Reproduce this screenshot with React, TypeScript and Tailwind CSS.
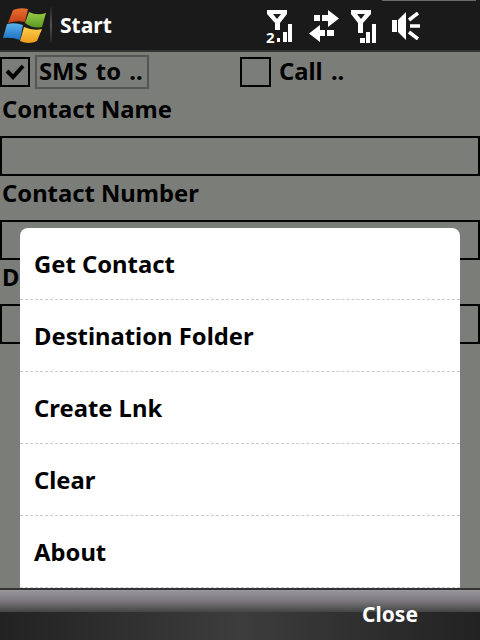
const font = { fontFamily: '"Noto Sans", "DejaVu Sans", sans-serif' };

function WinLogo() {
  return (
    <svg width="50" height="50" viewBox="0 0 50 50" className="block">
      <defs>
        <linearGradient id="red" x1="0" y1="0" x2="0" y2="1">
          <stop offset="0" stopColor="#e8702c" />
          <stop offset="1" stopColor="#c63f17" />
        </linearGradient>
        <linearGradient id="green" x1="0" y1="0" x2="0" y2="1">
          <stop offset="0" stopColor="#9ccb45" />
          <stop offset="1" stopColor="#5a9a26" />
        </linearGradient>
        <linearGradient id="blue" x1="0" y1="0" x2="0" y2="1">
          <stop offset="0" stopColor="#5cb3ea" />
          <stop offset="1" stopColor="#1a6fc4" />
        </linearGradient>
        <linearGradient id="yellow" x1="0" y1="0" x2="0" y2="1">
          <stop offset="0" stopColor="#fbd04a" />
          <stop offset="1" stopColor="#ee9a1e" />
        </linearGradient>
      </defs>
      <path d="M13 10 Q20 7 28 9 L25 22 Q17 20 8 23 Z" fill="url(#red)" />
      <path d="M29 12 Q37 16 46 13 L42 27 Q33 29 25 23 Z" fill="url(#green)" />
      <path d="M7 24 Q15 22 23 25 L20 40 Q12 37 3 38 Z" fill="url(#blue)" />
      <path d="M24 27 Q33 31 42 29 L37 41 Q29 45 20 41 Z" fill="url(#yellow)" />
    </svg>
  );
}

function SignalOne() {
  return (
    <div className="relative ml-0 h-[32px] w-[26px]">
      <svg width="26" height="32" viewBox="0 0 26 32" className="block">
        <path d="M1 0H21V4L14 13V20H9V13L1 4ZM7 4L11 9L15 4Z" fill="#fff" fillRule="evenodd" />
        <rect x="11" y="28" width="3" height="4" fill="#fff" />
        <rect x="17" y="22" width="4" height="10" fill="#fff" />
        <rect x="22" y="14" width="4" height="18" fill="#fff" />
      </svg>
      <span className="absolute bottom-[-3px] left-0 text-[15px] font-bold leading-none text-white">2</span>
    </div>
  );
}

function SignalTwo() {
  return (
    <svg width="25" height="33" viewBox="0 0 25 33" className="ml-[12px] block">
      <path d="M0 0H20V4L12 13V23H7V13L0 4ZM6 4L10 9L14 4Z" fill="#fff" fillRule="evenodd" />
      <rect x="9" y="28" width="5" height="5" fill="#fff" />
      <rect x="15" y="22" width="4" height="11" fill="#fff" />
      <rect x="21" y="14" width="4" height="19" fill="#fff" />
    </svg>
  );
}

function ArrowsIcon() {
  return (
    <svg width="30" height="32" viewBox="0 0 30 32" className="ml-[17px] block">
      <path d="M5 5H11V11H5ZM13 5H19V0L30 8.5L19 17V11H13ZM18 20H25V26H18ZM11 20H16V26H11V32L0 23.5L11 15Z" fill="#fff" />
    </svg>
  );
}

function SpeakerIcon() {
  return (
    <svg width="28" height="28" viewBox="0 0 28 28" className="ml-[16px] block">
      <path d="M0 8H5V20H0ZM6 8L14 0V28L6 20Z" fill="#fff" />
      <path d="M17 8L26 1M18 14H28M17 20L26 27" stroke="#fff" strokeWidth="3.5" fill="none" />
    </svg>
  );
}

function Field({ label }: { label: string }) {
  return (
    <div className="flex flex-col">
      <div className="h-[38px] pl-[2px] text-[23.8px] font-bold leading-[22px] text-black">{label}</div>
      <div className="h-[40px] border-[2px] border-black"></div>
    </div>
  );
}

const menuItems = ["Get Contact", "Destination Folder", "Create Lnk", "Clear", "About"];

export default function App() {
  return (
    <div style={font} className="relative flex h-[640px] w-[480px] flex-col overflow-hidden bg-[#7b7d79]">
      <header className="relative flex h-[52px] shrink-0 items-center border-b-2 border-[#333533] bg-[#1a1a1a]">
        <WinLogo />
        <div className="h-[36px] w-[2px] bg-gradient-to-b from-[#222] via-[#555] to-[#222]"></div>
        <div className="ml-[8px] pt-[2px] text-[21px] font-bold text-white">Start</div>
        <div className="ml-auto mr-[60px] mt-[2px] flex items-center">
          <SignalOne />
          <ArrowsIcon />
          <SignalTwo />
          <SpeakerIcon />
        </div>
        <div className="absolute right-[4px] top-0 h-px w-[94px] bg-[#6a6a6a]"></div>
      </header>

      <main className="flex-1 pt-[3px]">
        <div className="flex h-[34px] items-center">
          <div className="flex h-[30px] w-[30px] items-center justify-center border-[2px] border-black">
            <svg width="20" height="16" viewBox="0 0 20 16">
              <path d="M2 7L8 13L18 2" stroke="#000" strokeWidth="4" fill="none" />
            </svg>
          </div>
          <div className="ml-[5px] flex h-[34px] w-[114px] items-center border-[2px] border-[#555] pl-[2px] text-[23.8px] font-bold text-black [word-spacing:2px]">
            SMS to ..
          </div>
          <div className="ml-[91px] h-[30px] w-[31px] border-[2px] border-black"></div>
          <div className="ml-[8px] text-[23.8px] font-bold text-black [word-spacing:2px]">Call ..</div>
        </div>
        <div className="mt-[9px] flex flex-col gap-[6px]">
          <Field label="Contact Name" />
          <Field label="Contact Number" />
          <Field label="Destination Folder" />
        </div>
      </main>

      <footer className="flex h-[52px] shrink-0 flex-col border-t-2 border-[#333] bg-[#2b2b2b]">
        <div className="h-[22px] bg-gradient-to-b from-[#9a989c] via-[#7a787c] to-[#454545]"></div>
        <div className="flex flex-1 justify-end bg-gradient-to-r from-[#222] via-[#3d3d3d] to-[#222]">
          <div className="-mt-[12px] w-[180px] pl-[62px] text-[21px] font-bold leading-[28px] text-white">Close</div>
        </div>
      </footer>

      <div className="absolute left-[20px] top-[228px] w-[440px] overflow-hidden rounded-t-[8px] bg-white">
        {menuItems.map((item) => (
          <div
            key={item}
            className="flex h-[72px] items-center border-b border-dashed border-[#ccc] pt-[2px] pl-[14px] text-[23.8px] font-bold text-black"
          >
            {item}
          </div>
        ))}
      </div>
    </div>
  );
}
